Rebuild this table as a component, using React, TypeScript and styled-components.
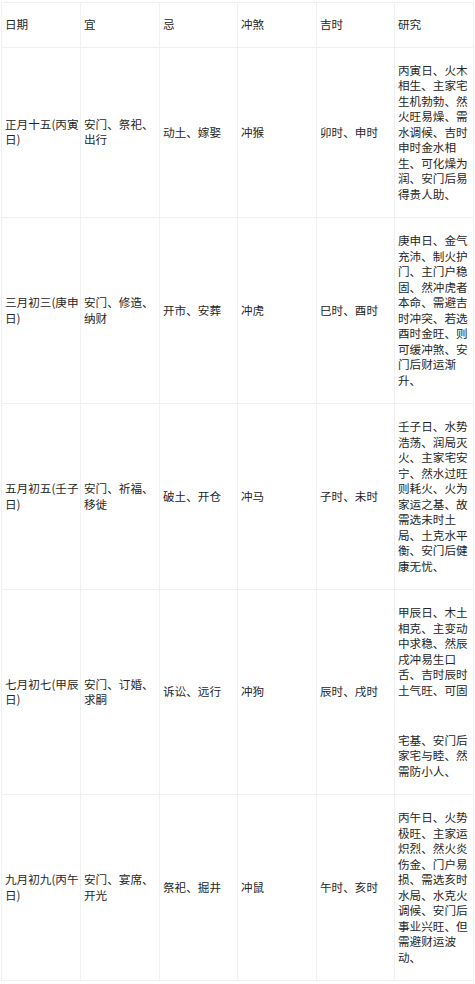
import React from "react";
import styled, { createGlobalStyle } from "styled-components";

const GlobalStyle = createGlobalStyle`
  html, body {
    margin: 0;
    padding: 0;
    background: #ffffff;
  }
  body {
    font-family: "Noto Sans CJK SC", "Noto Sans", sans-serif;
    color: #262626;
  }
`;

const Page = styled.div`
  padding: 2px 2px 0 1px;
  width: 475px;
  box-sizing: border-box;
`;

const Table = styled.table`
  width: 472px;
  border-collapse: collapse;
  table-layout: fixed;
  font-size: 11.6px;
  line-height: 15.5px;
  color: #262626;
`;

const Col = styled.col<{ $w: number }>`
  width: ${(p) => p.$w}px;
`;

const HeadCell = styled.th`
  border: 1px solid #f0f0f0;
  padding: 14px 1px 14px 3px;
  text-align: left;
  font-weight: 400;
  vertical-align: middle;
`;

const Cell = styled.td`
  border: 1px solid #f0f0f0;
  padding: 15px 1px 15px 3px;
  text-align: left;
  vertical-align: middle;
  word-break: break-all;
`;

const Para = styled.div<{ $gap?: number }>`
  margin-top: ${(p) => p.$gap ?? 0}px;
`;

type Row = {
  date: string;
  yi: string;
  ji: string;
  chong: string;
  shi: string;
  research: { text: string; gap?: number }[];
};

const headers = ["日期", "宜", "忌", "冲煞", "吉时", "研究"];
const widths = [79, 79, 78, 79, 78, 79];

const rows: Row[] = [
  {
    date: "正月十五(丙寅日)",
    yi: "安门、祭祀、出行",
    ji: "动土、嫁娶",
    chong: "冲猴",
    shi: "卯时、申时",
    research: [
      {
        text: "丙寅日、火木相生、主家宅生机勃勃、然火旺易燥、需水调候、吉时申时金水相生、可化燥为润、安门后易得贵人助、",
      },
    ],
  },
  {
    date: "三月初三(庚申日)",
    yi: "安门、修造、纳财",
    ji: "开市、安葬",
    chong: "冲虎",
    shi: "巳时、酉时",
    research: [
      {
        text: "庚申日、金气充沛、制火护门、主门户稳固、然冲虎者本命、需避吉时冲突、若选酉时金旺、则可缓冲煞、安门后财运渐升、",
      },
    ],
  },
  {
    date: "五月初五(壬子日)",
    yi: "安门、祈福、移徙",
    ji: "破土、开仓",
    chong: "冲马",
    shi: "子时、未时",
    research: [
      {
        text: "壬子日、水势浩荡、润局灭火、主家宅安宁、然水过旺则耗火、火为家运之基、故需选未时土局、土克水平衡、安门后健康无忧、",
      },
    ],
  },
  {
    date: "七月初七(甲辰日)",
    yi: "安门、订婚、求嗣",
    ji: "诉讼、远行",
    chong: "冲狗",
    shi: "辰时、戌时",
    research: [
      { text: "甲辰日、木土相克、主变动中求稳、然辰戌冲易生口舌、吉时辰时土气旺、可固" },
      { text: "宅基、安门后家宅与睦、然需防小人、", gap: 34.5 },
    ],
  },
  {
    date: "九月初九(丙午日)",
    yi: "安门、宴席、开光",
    ji: "祭祀、掘井",
    chong: "冲鼠",
    shi: "午时、亥时",
    research: [
      {
        text: "丙午日、火势极旺、主家运炽烈、然火炎伤金、门户易损、需选亥时水局、水克火调候、安门后事业兴旺、但需避财运波动、",
      },
    ],
  },
];

export default function App() {
  return (
    <>
      <GlobalStyle />
      <Page>
        <Table>
          <colgroup>
            {widths.map((w, i) => (
              <Col key={i} $w={w} />
            ))}
          </colgroup>
          <thead>
            <tr>
              {headers.map((h) => (
                <HeadCell key={h}>{h}</HeadCell>
              ))}
            </tr>
          </thead>
          <tbody>
            {rows.map((r) => (
              <tr key={r.date}>
                <Cell>{r.date}</Cell>
                <Cell>{r.yi}</Cell>
                <Cell>{r.ji}</Cell>
                <Cell>{r.chong}</Cell>
                <Cell>{r.shi}</Cell>
                <Cell>
                  {r.research.map((p, i) => (
                    <Para key={i} $gap={p.gap}>
                      {p.text}
                    </Para>
                  ))}
                </Cell>
              </tr>
            ))}
          </tbody>
        </Table>
      </Page>
    </>
  );
}
